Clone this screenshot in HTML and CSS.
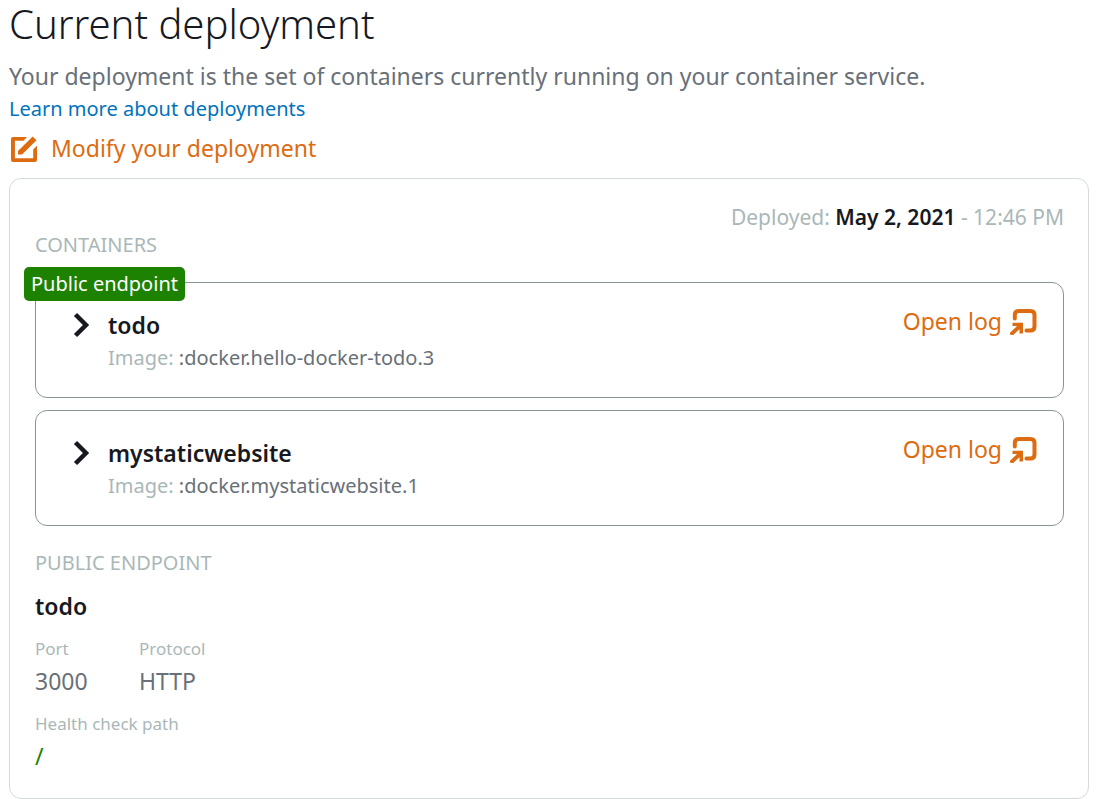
FILE: index.html
```html
<!DOCTYPE html>
<html lang="en">
<head>
<meta charset="utf-8">
<title>Current deployment</title>
<link rel="stylesheet" href="styles.css">
</head>
<body>
<main class="page">
  <h1 class="title">Current deployment</h1>
  <p class="intro">Your deployment is the set of containers currently running on your container service.</p>
  <a class="learn" href="#deployments">Learn more about deployments</a>
  <button class="action modify" type="button">
    <svg class="icon" viewBox="0 0 28 28" aria-hidden="true"><path d="M3 3H17L13.500 6.700H4.900V24.300H23.200V15.500L27 11.700V26Q27 28 25 28H3Q1 28 1 26V5Q1 3 3 3Z" fill="currentColor"/><path d="M8 20.500V17L22.700 2.500L26.500 6.300L12 20.500Z" fill="currentColor"/></svg>
    Modify your deployment
  </button>
  <section class="card">
    <p class="deployed">Deployed: <strong>May 2, 2021</strong> - 12:46 PM</p>
    <h2 class="heading">CONTAINERS</h2>
    <div class="containers">
      <article class="container">
        <span class="badge">Public endpoint</span>
        <button class="toggle" type="button" aria-label="Expand todo"><svg class="chevron" viewBox="0 0 18 26" aria-hidden="true"><path d="M3.500 2.500L14 13L3.500 23.500" fill="none" stroke="currentColor" stroke-width="4.500"/></svg></button>
        <div class="details">
          <h3 class="name">todo</h3>
          <p class="image"><span class="muted">Image:</span> :docker.hello-docker-todo.3</p>
        </div>
        <button class="action" type="button">Open log
          <svg class="icon" viewBox="0 0 28 28" aria-hidden="true"><path d="M4.800 11.500V8Q4.800 4 8.800 4H20.500Q24.500 4 24.500 8V19.500Q24.500 23.500 20.500 23.500H16.500" fill="none" stroke="currentColor" stroke-width="4" stroke-linecap="round"/><path d="M2 26.500L9 20" fill="none" stroke="currentColor" stroke-width="3.800" stroke-linecap="round"/><path d="M2.500 15.800H13V26.500H9.500V22L6.500 19H2.500Z" fill="currentColor"/></svg>
        </button>
      </article>
      <article class="container">
        <button class="toggle" type="button" aria-label="Expand mystaticwebsite"><svg class="chevron" viewBox="0 0 18 26" aria-hidden="true"><path d="M3.500 2.500L14 13L3.500 23.500" fill="none" stroke="currentColor" stroke-width="4.500"/></svg></button>
        <div class="details">
          <h3 class="name">mystaticwebsite</h3>
          <p class="image"><span class="muted">Image:</span> :docker.mystaticwebsite.1</p>
        </div>
        <button class="action" type="button">Open log
          <svg class="icon" viewBox="0 0 28 28" aria-hidden="true"><path d="M4.800 11.500V8Q4.800 4 8.800 4H20.500Q24.500 4 24.500 8V19.500Q24.500 23.500 20.500 23.500H16.500" fill="none" stroke="currentColor" stroke-width="4" stroke-linecap="round"/><path d="M2 26.500L9 20" fill="none" stroke="currentColor" stroke-width="3.800" stroke-linecap="round"/><path d="M2.500 15.800H13V26.500H9.500V22L6.500 19H2.500Z" fill="currentColor"/></svg>
        </button>
      </article>
    </div>
    <h2 class="heading">PUBLIC ENDPOINT</h2>
    <h3 class="name endpoint">todo</h3>
    <dl class="facts">
      <div class="fact"><dt>Port</dt><dd>3000</dd></div>
      <div class="fact"><dt>Protocol</dt><dd>HTTP</dd></div>
      <div class="fact wide"><dt>Health check path</dt><dd class="path">/</dd></div>
    </dl>
  </section>
</main>
</body>
</html>
```
FILE: styles.css
```css
* { box-sizing: border-box; }
body { margin: 0; background: #fff; color: #687078; font-family: "Noto Sans", "Open Sans", sans-serif; font-size: 20px; line-height: 32px; }
h1, h2, h3, p, dl, dd { margin: 0; }
.page { display: flex; flex-direction: column; align-items: flex-start; padding: 0 7px 0 9px; }
.title { color: #16191f; font-size: 40px; font-weight: 300; line-height: 48px; padding-bottom: 12px; }
.intro { font-size: 23px; }
.learn { padding-top: 1px; color: #0073bb; text-decoration: none; }
button { padding: 0; border: 0; background: none; font: inherit; cursor: pointer; }
.action { display: flex; align-items: center; gap: 8px; color: #dd6b10; font-size: 23px; line-height: 32px; white-space: nowrap; }
.modify { gap: 13px; margin: 7px 0 14px; padding-left: 1px; }
.icon { width: 28px; height: 28px; flex: none; }
.card { width: 100%; padding: 22px 24px 26px 25px; border: 1px solid #d5dbdb; border-radius: 12px; }
.deployed { color: #aab7b8; font-size: 21px; text-align: right; }
.deployed strong { color: #16191f; font-weight: 600; }
.heading { color: #aab7b8; font-size: 20px; font-weight: 400; line-height: 24px; }
.containers { display: grid; gap: 12px; margin: 25px 0; }
.container { position: relative; display: flex; align-items: flex-start; padding: 26px 25px 24px 36px; border: 1px solid #879596; border-radius: 12px; }
.badge { position: absolute; top: -16px; left: -12px; padding: 1px 7px; border-radius: 5px; background: #1d8102; color: #fff; }
.toggle { width: 36px; height: 32px; color: #16191f; text-align: left; }
.chevron { display: block; width: 18px; height: 26px; }
.details { flex: 1; }
.name { color: #16191f; font-size: 23px; font-weight: 600; line-height: 32px; }
.muted { color: #aab7b8; }
.image { padding-top: 1px; margin-bottom: -1px; }
.container .action { margin-top: -4px; }
.endpoint { margin: 15px 0; }
.facts { display: grid; grid-template-columns: 104px 1fr; row-gap: 15px; }
.fact { display: grid; gap: 4px; }
.wide { grid-column: 1 / -1; }
dt { color: #aab7b8; font-size: 17px; line-height: 24px; }
dd { font-size: 23px; }
.path { color: #1d8102; }
```
